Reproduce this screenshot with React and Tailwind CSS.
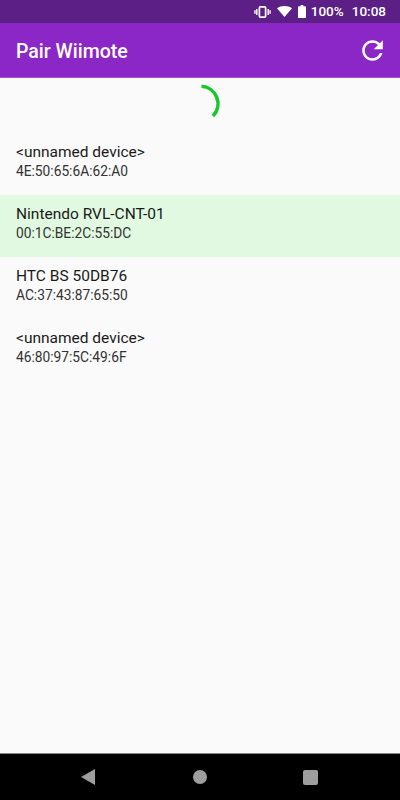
const devices = [
  { name: "<unnamed device>", addr: "4E:50:65:6A:62:A0" },
  { name: "Nintendo RVL-CNT-01", addr: "00:1C:BE:2C:55:DC", selected: true },
  { name: "HTC BS 50DB76", addr: "AC:37:43:87:65:50" },
  { name: "<unnamed device>", addr: "46:80:97:5C:49:6F" },
];

function StatusBar() {
  return (
    <div className="h-[23px] shrink-0 bg-[#5c1f86] flex items-center justify-end pr-[14px] text-white text-[13.5px] font-medium">
      <svg width="17" height="12" viewBox="0 0 18 14" fill="none" className="mr-[6px]" preserveAspectRatio="none">
        <rect x="5.700" y="1" width="6.600" height="12" rx="1" stroke="white" strokeWidth="1.800" />
        <path d="M3 3.500v7M1 5v4M15 3.500v7M17 5v4" stroke="white" strokeWidth="1.500" />
      </svg>
      <svg width="15" height="11" viewBox="0 0 18 13" className="mr-[6px]" preserveAspectRatio="none">
        <path d="M0 2.600C2.500 .9 5.600 0 9 0s6.500.9 9 2.600L9 13z" fill="white" />
      </svg>
      <svg width="8" height="13" viewBox="0 0 9 15" className="mr-[5px]" preserveAspectRatio="none">
        <path d="M3 0h3v1.500h2a1 1 0 0 1 1 1V14a1 1 0 0 1-1 1H1a1 1 0 0 1-1-1V2.500a1 1 0 0 1 1-1h2z" fill="white" />
      </svg>
      <span className="mr-[8px]">100%</span>
      <span>10:08</span>
    </div>
  );
}

export default function App() {
  return (
    <div className="w-[400px] h-[800px] flex flex-col bg-[#fafafa] overflow-hidden font-['Roboto',sans-serif]">
      <StatusBar />

      <div className="h-[55px] shrink-0 bg-[#8a27c6] flex items-center justify-between pl-[16px] pr-[12px] border-b border-[#a255d4]">
        <h1 className="text-white text-[19.5px] font-medium pt-[3px]">Pair Wiimote</h1>
        <svg width="31" height="31" viewBox="0 0 24 24" fill="white">
          <path d="M17.650 6.350C16.200 4.900 14.210 4 12 4c-4.420 0-7.990 3.580-7.990 8s3.570 8 7.990 8c3.730 0 6.840-2.550 7.730-6h-2.080c-.82 2.330-3.040 4-5.650 4-3.310 0-6-2.690-6-6s2.690-6 6-6c1.660 0 3.140.69 4.220 1.780L13 11h7V4l-2.350 2.350z" />
        </svg>
      </div>

      <div className="flex-1">
        <div className="h-[55px] flex justify-center items-start pt-[4px]">
          <svg width="44" height="44" viewBox="0 0 44 44" fill="none">
            <path d="M23.500 4.300A17.500 17.500 0 0 1 35 34" stroke="#14c828" strokeWidth="3.600" />
          </svg>
        </div>
        {devices.map((d) => (
          <div
            key={d.addr}
            className={`h-[62px] pl-[16px] pt-[9px] ${d.selected ? "bg-[#e0f9e0]" : ""}`}
          >
            <div className="text-[15.500px] leading-[20px] text-[#1a1a1a]">{d.name}</div>
            <div className="text-[13.750px] leading-[18px] text-[#333333]">{d.addr}</div>
          </div>
        ))}
      </div>

      <div className="h-[47px] shrink-0 bg-black border-t border-[#888888] flex items-center justify-between pl-[81px] pr-[82px]">
        <svg width="14" height="16" viewBox="0 0 14 16">
          <path d="M14 0V16L0 8z" fill="#9e9e9e" />
        </svg>
        <div className="w-[14px] h-[14px] ml-[2px] rounded-full bg-[#9e9e9e]" />
        <div className="w-[15px] h-[15px] rounded-[2px] bg-[#9e9e9e]" />
      </div>
    </div>
  );
}
